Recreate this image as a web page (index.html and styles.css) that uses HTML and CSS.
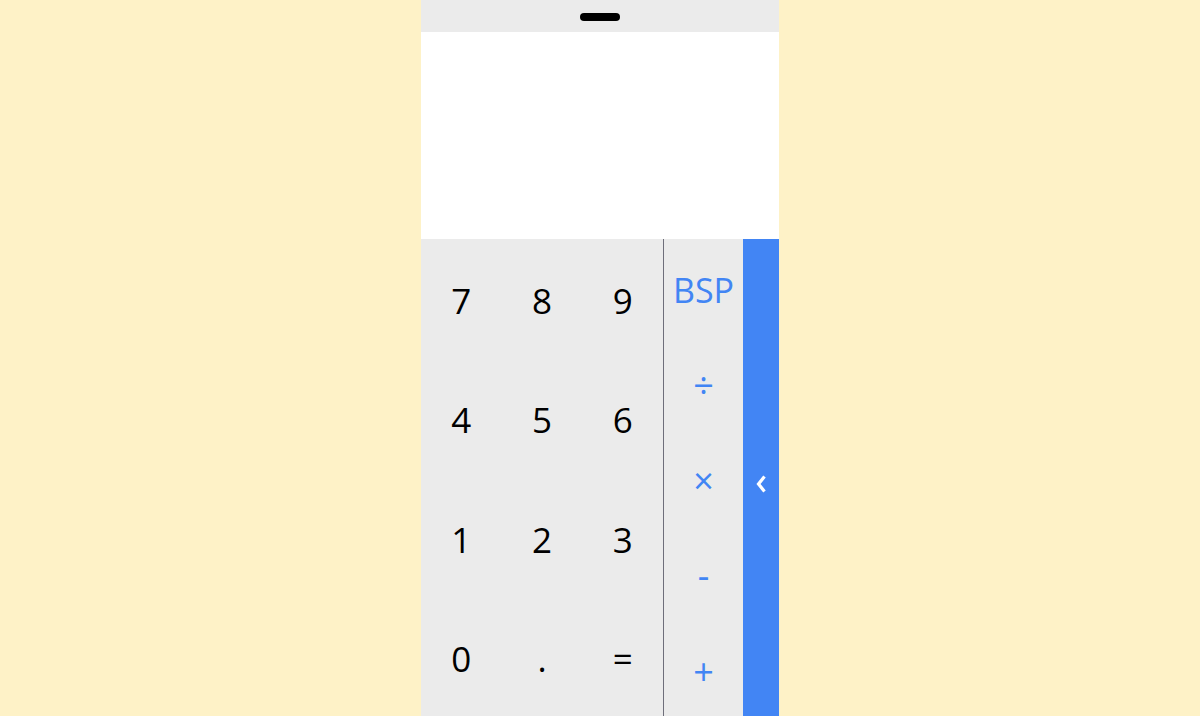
FILE: index.html
```html
<!DOCTYPE html>
<html>
<head>
<meta charset="utf-8">
<link rel="stylesheet" href="styles.css">
</head>
<body>
<div class="phone">
  <div class="topbar"><div class="pill"></div></div>
  <div class="display"></div>
  <div class="keypad">
    <div class="numbers">
      <div class="key">7</div><div class="key">8</div><div class="key">9</div>
      <div class="key">4</div><div class="key">5</div><div class="key">6</div>
      <div class="key">1</div><div class="key">2</div><div class="key">3</div>
      <div class="key">0</div><div class="key">.</div><div class="key">=</div>
    </div>
    <div class="ops">
      <div class="op bsp">BSP</div>
      <div class="op">÷</div>
      <div class="op">×</div>
      <div class="op">-</div>
      <div class="op">+</div>
    </div>
    <div class="strip">
      <svg class="chev" width="12" height="20" viewBox="0 0 12 20"><path d="M9.5 2.5 L3.5 10 L9.5 17.5" fill="none" stroke="#fff" stroke-width="3.2"/></svg>
    </div>
  </div>
</div>
</body>
</html>
```
FILE: styles.css
```css
html, body {
  margin: 0;
  padding: 0;
  height: 100%;
}
body {
  background: #fef2c7;
  display: flex;
  justify-content: center;
  font-family: "Open Sans", "Noto Sans", sans-serif;
}
.phone {
  width: 358px;
  height: 716px;
  display: flex;
  flex-direction: column;
}
.topbar {
  height: 32px;
  background: #ebebeb;
  display: flex;
  justify-content: center;
  align-items: center;
}
.pill {
  width: 40px;
  height: 8px;
  border-radius: 4px;
  background: #000;
  margin-top: 2px;
}
.display {
  height: 207px;
  background: #fff;
}
.keypad {
  flex: 1;
  display: flex;
  background: #ebebeb;
}
.numbers {
  width: 242px;
  border-right: 1px solid #6e6e7a;
  display: grid;
  grid-template-columns: repeat(3, 1fr);
  grid-template-rows: repeat(4, 1fr);
}
.key {
  display: flex;
  align-items: center;
  justify-content: center;
  font-size: 35px;
  color: #000;
  padding-top: 4px;
}
.ops {
  width: 79px;
  display: grid;
  grid-template-rows: repeat(5, 1fr);
}
.op {
  display: flex;
  align-items: center;
  justify-content: center;
  font-size: 36px;
  color: #4285f4;
  padding-top: 6px;
}
.op.bsp {
  font-size: 34px;
}
.strip {
  width: 36px;
  background: #4285f4;
  display: flex;
  align-items: center;
  justify-content: center;
}
.chev {
  margin-top: 12px;
}
```
